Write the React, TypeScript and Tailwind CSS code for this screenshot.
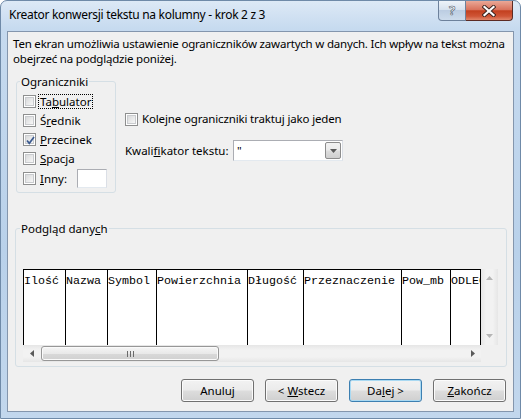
import React from "react";

const ui = "font-['Noto_Sans',sans-serif] text-[11.5px] text-black whitespace-nowrap";

const columns = [
  { label: "Ilość", w: "w-[42px]" },
  { label: "Nazwa", w: "w-[42px]" },
  { label: "Symbol", w: "w-[49px]" },
  { label: "Powierzchnia", w: "w-[91px]" },
  { label: "Długość", w: "w-[56px]" },
  { label: "Przeznaczenie", w: "w-[98px]" },
  { label: "Pow_mb", w: "w-[49px]" },
];

function Check({ checked }: { checked?: boolean }) {
  return (
    <span className="w-[13px] h-[13px] shrink-0 border border-[#8e8f8f] bg-white p-[1px] flex relative">
      <span className="flex-1 border border-[#c9cbce] bg-gradient-to-br from-[#d9dadb] to-[#f7f7f7]" />
      {checked && (
        <svg className="absolute left-[1px] top-[1px]" width="11" height="11" viewBox="0 0 11 11">
          <path d="M2 5.5 L4.3 8.3 L9 2" fill="none" stroke="#3b5a8f" strokeWidth="1.7" />
        </svg>
      )}
    </span>
  );
}

function Btn({ children, def }: { children: React.ReactNode; def?: boolean }) {
  return (
    <button
      className={`w-[73px] h-[23px] rounded-[3px] border flex items-center justify-center bg-[linear-gradient(#f2f2f2_0%,#ebebeb_48%,#dddddd_52%,#cfcfcf_100%)] ${
        def ? "border-[#3c7fb1] shadow-[inset_0_0_0_1px_#a9d9f2]" : "border-[#707070] shadow-[inset_0_0_0_1px_#fbfbfb]"
      }`}
    >
      {children}
    </button>
  );
}

function Arrow({ dir, light }: { dir: "l" | "r" | "u" | "d"; light?: boolean }) {
  const fill = light ? "#b5b5b5" : "#5a5a5a";
  if (dir === "l") return <svg width="4" height="7" viewBox="0 0 4 7"><path d="M4 0V7L0 3.5z" fill={fill} /></svg>;
  if (dir === "r") return <svg width="4" height="7" viewBox="0 0 4 7"><path d="M0 0V7L4 3.5z" fill={fill} /></svg>;
  if (dir === "u") return <svg width="7" height="4" viewBox="0 0 7 4"><path d="M0 4H7L3.5 0z" fill={fill} /></svg>;
  return <svg width="7" height="4" viewBox="0 0 7 4"><path d="M0 0H7L3.5 4z" fill={fill} /></svg>;
}

export default function App() {
  return (
    <div className={`w-[521px] h-[419px] bg-white ${ui}`}>
      <div className="w-[521px] h-[419px] rounded-t-[7px] border border-[#6f8aa8] bg-[linear-gradient(180deg,#dde9f6_0px,#c6daef_28px,#b9d1ea_60%,#c2d7ed_100%)] flex flex-col px-[6px] pb-[6px]">
        {/* title bar */}
        <div className="h-[30px] flex items-start shrink-0">
          <div className="ml-[2px] mt-[6px] leading-[15px] text-[12px] tracking-[-0.3px]">
            Kreator konwersji tekstu na kolumny - krok 2 z 3
          </div>
          <div className="ml-auto mr-[1px] flex">
            <div className="w-[28px] h-[20px] rounded-bl-[4px] border border-t-0 border-[#6d819b] bg-[linear-gradient(#eef3f9_0%,#d7e2ef_45%,#bccde2_50%,#cddcec_100%)] flex items-center justify-center">
              <span className="text-white font-bold text-[13px] leading-none [-webkit-text-stroke:0.6px_#4a5566]">?</span>
            </div>
            <div className="w-[47px] h-[20px] rounded-br-[4px] border border-t-0 border-l-0 border-[#5c2b24] bg-[linear-gradient(#eaa897_0%,#d9735d_45%,#c3401f_52%,#cf5536_80%,#e1866a_100%)] flex items-center justify-center">
              <svg width="14" height="12" viewBox="0 0 14 12">
                <path d="M2.5 2 L11.5 10 M11.5 2 L2.5 10" stroke="#3a2420" strokeWidth="4" strokeLinecap="square" />
                <path d="M2.5 2 L11.5 10 M11.5 2 L2.5 10" stroke="#ffffff" strokeWidth="2.2" strokeLinecap="square" />
              </svg>
            </div>
          </div>
        </div>

        {/* client area */}
        <div className="flex-1 border border-[#8496ad] bg-[#f0f0f0] flex flex-col">
          <p className="mt-[4px] ml-[5px] leading-[15px] tracking-[-0.2px]">
            Ten ekran umożliwia ustawienie ograniczników zawartych w danych. Ich wpływ na tekst można
            <br />
            obejrzeć na podglądzie poniżej.
          </p>

          <div className="flex items-start mt-[8px] ml-[8px]">
            <fieldset className="w-[100px] border border-[#d5dfe5] rounded-[3px] pb-[3px]">
              <legend className="ml-[3px] px-[1px] leading-[15px]">Ograniczniki</legend>
              <div className="mt-[3px] flex flex-col">
                <div className="h-[19px] flex items-center ml-[6px] gap-[2px]">
                  <Check />
                  <span className="border border-dotted border-black px-[1px] leading-[13px]">
                    Ta<span className="underline">b</span>ulator
                  </span>
                </div>
                <div className="h-[19px] flex items-center ml-[6px] gap-[4px]">
                  <Check />
                  <span>
                    Ś<span className="underline">r</span>ednik
                  </span>
                </div>
                <div className="h-[19px] flex items-center ml-[6px] gap-[4px]">
                  <Check checked />
                  <span>
                    <span className="underline">P</span>rzecinek
                  </span>
                </div>
                <div className="h-[19px] flex items-center ml-[6px] gap-[4px]">
                  <Check />
                  <span>
                    <span className="underline">S</span>pacja
                  </span>
                </div>
                <div className="h-[21px] flex items-center ml-[6px] gap-[4px]">
                  <Check />
                  <span className="w-[33px]">
                    <span className="underline">I</span>nny:
                  </span>
                  <span className="w-[30px] h-[19px] border border-[#abadb3] border-b-[#e3e9ef] border-r-[#dbdfe6] bg-white" />
                </div>
              </div>
            </fieldset>

            <div className="ml-[9px] pt-[37px] flex flex-col">
              <div className="h-[16px] flex items-center gap-[4px]">
                <Check />
                <span className="tracking-[-0.15px]">
                  Kole<span className="underline">j</span>ne ograniczniki traktuj jako jeden
                </span>
              </div>
              <div className="mt-[13px] h-[21px] flex items-center">
                <span className="w-[108px]">
                  Kwali<span className="underline">f</span>ikator tekstu:
                </span>
                <div className="w-[110px] h-[21px] border border-[#abadb3] border-b-[#e3e9ef] border-r-[#dbdfe6] bg-white flex items-center">
                  <span className="flex-1 pl-[3px] leading-[15px]">"</span>
                  <span className="w-[16px] h-[17px] mr-[1px] border border-[#8c8c8c] rounded-[2px] bg-[linear-gradient(#f2f2f2_0%,#ebebeb_48%,#dddddd_52%,#cfcfcf_100%)] flex items-center justify-center">
                    <Arrow dir="d" />
                  </span>
                </div>
              </div>
            </div>
          </div>

          <fieldset className="mt-[28px] ml-[7px] mr-[6px] border border-[#d5dfe5] rounded-[3px] pb-[4px]">
            <legend className="ml-[4px] px-[1px] leading-[15px]">
              Podgląd dany<span className="underline">c</span>h
            </legend>
            <div className="mt-[33px] ml-[7px] w-[475px] flex flex-col">
              <div className="h-[76px] flex">
                <div className="w-[458px] h-[76px] bg-white border-t border-r border-black flex overflow-hidden font-['Liberation_Mono',monospace] text-[11.67px] leading-[14px]">
                  {columns.map((c) => (
                    <div key={c.label} className={`${c.w} shrink-0 border-l border-black pt-[4px] whitespace-nowrap overflow-hidden`}>
                      {c.label}
                    </div>
                  ))}
                  <div className="flex-1 min-w-0 border-l border-black pt-[4px] whitespace-nowrap overflow-hidden">
                    ODLEGŁOŚĆ
                  </div>
                </div>
                <div className="w-[17px] bg-[linear-gradient(90deg,#e6e6e6,#f2f2f2_30%,#f2f2f2_70%,#e6e6e6)] flex flex-col items-center justify-between py-[7px]">
                  <Arrow dir="u" light />
                  <Arrow dir="d" light />
                </div>
              </div>
              <div className="h-[17px] flex">
                <div className="w-[458px] flex items-center bg-[linear-gradient(#e6e6e6,#f2f2f2_30%,#f2f2f2_70%,#e6e6e6)]">
                  <div className="w-[17px] flex justify-center">
                    <Arrow dir="l" />
                  </div>
                  <div className="ml-[1px] w-[178px] h-[15px] rounded-[3px] border border-[#979797] bg-[linear-gradient(#f5f5f5_0%,#e9e9e9_50%,#d9d9d9_51%,#d0d0d0_100%)] shadow-[inset_0_0_0_1px_#fafafa] flex items-center justify-center gap-[2px]">
                    <span className="w-px h-[6px] bg-[#6a6a6a]" />
                    <span className="w-px h-[6px] bg-[#6a6a6a]" />
                    <span className="w-px h-[6px] bg-[#6a6a6a]" />
                  </div>
                  <div className="ml-auto w-[17px] flex justify-center">
                    <Arrow dir="r" />
                  </div>
                </div>
                <div className="w-[17px] bg-[#f0f0f0]" />
              </div>
            </div>
          </fieldset>

          <div className="mt-[12px] mr-[7px] flex justify-end gap-[11px]">
            <Btn>Anuluj</Btn>
            <Btn>
              &lt; <span className="underline ml-[3px]">W</span>stecz
            </Btn>
            <Btn def>
              Da<span className="underline">l</span>ej &gt;
            </Btn>
            <Btn>
              <span className="underline">Z</span>akończ
            </Btn>
          </div>
        </div>
      </div>
    </div>
  );
}
